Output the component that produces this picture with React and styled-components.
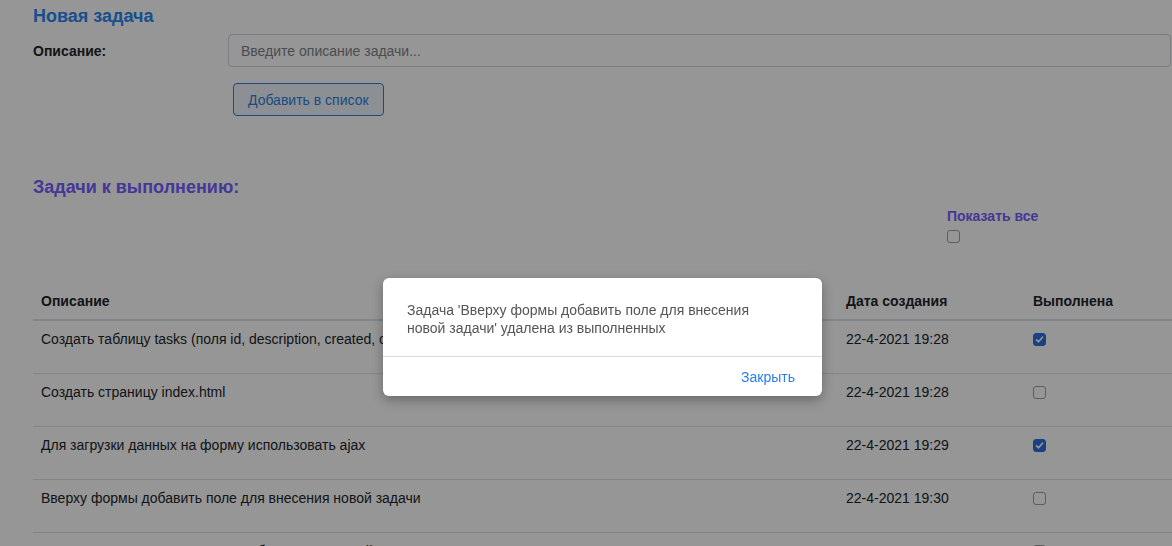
import React from "react";
import styled, { createGlobalStyle } from "styled-components";

const GlobalStyle = createGlobalStyle`
  html, body {
    margin: 0;
    padding: 0;
    overflow: hidden;
    background: #ffffff;
    font-family: "Liberation Sans", Arial, sans-serif;
    color: #212529;
  }
`;

const Page = styled.div`
  width: 1160px;
  padding-left: 33px;
`;

const Title = styled.h2`
  margin: 0;
  padding-top: 6px;
  font-size: 18px;
  line-height: 20px;
  font-weight: 700;
  color: ${(p) => p.$color};
`;

const FormRow = styled.div`
  display: grid;
  grid-template-columns: 195px 943px;
  align-items: center;
  margin-top: 8px;
`;

const Label = styled.label`
  font-size: 14px;
  font-weight: 700;
  color: #212529;
`;

const Input = styled.input`
  box-sizing: border-box;
  height: 33px;
  padding: 0 12px;
  border: 1px solid #ced4da;
  border-radius: 4px;
  font-family: inherit;
  font-size: 14px;
  background: #fff;
  &::placeholder {
    color: #7d848b;
  }
`;

const AddButton = styled.button`
  box-sizing: border-box;
  margin: 16px 0 0 200px;
  height: 33px;
  padding: 0 14px;
  border: 1px solid #2f7fd8;
  border-radius: 4px;
  background: #eef5fd;
  color: #2f7fd8;
  font-family: inherit;
  font-size: 14px;
`;

const SectionTitle = styled(Title)`
  margin-top: 55px;
`;

const ShowAll = styled.div`
  margin: 11px 0 0 914px;
  display: flex;
  flex-direction: column;
  gap: 6px;
`;

const ShowAllLabel = styled.span`
  font-size: 14px;
  line-height: 16px;
  font-weight: 700;
  color: #7460ff;
`;

const Table = styled.table`
  margin-top: 40px;
  width: 1152px;
  table-layout: fixed;
  border-collapse: collapse;
  font-size: 14px;
`;

const Th = styled.th`
  text-align: left;
  padding: 8px;
  line-height: 20px;
  font-weight: 700;
  border-bottom: 2px solid #dee2e6;
`;

const Td = styled.td`
  vertical-align: top;
  height: 20px;
  padding: 8px 8px 24px;
  line-height: 20px;
  border-bottom: 1px solid #dee2e6;
  white-space: nowrap;
  overflow: hidden;
`;

const Box = styled.span`
  display: block;
  box-sizing: border-box;
  width: 13px;
  height: 13px;
  margin-top: ${(p) => p.$top || 0}px;
  border-radius: 3px;
  border: 1px solid ${(p) => (p.$checked ? "#2f6fe0" : "#9aa0a6")};
  background: ${(p) => (p.$checked ? "#2f6fe0" : "#fff")};
  position: relative;
  svg {
    position: absolute;
    left: 1px;
    top: 1px;
  }
`;

const Backdrop = styled.div`
  position: fixed;
  inset: 0;
  background: rgba(0, 0, 0, 0.41);
`;

const Modal = styled.div`
  position: fixed;
  top: 278px;
  left: 383px;
  width: 439px;
  background: #fff;
  border-radius: 6px;
  box-shadow: 0 4px 12px rgba(0, 0, 0, 0.3);
  font-family: "Liberation Sans", Arial, sans-serif;
`;

const ModalBody = styled.div`
  padding: 23px 24px 19px;
  border-bottom: 1px solid #dcdcdc;
  p {
    margin: 0;
    max-width: 370px;
    font-size: 14px;
    line-height: 18px;
    color: #555;
  }
`;

const ModalFooter = styled.div`
  display: flex;
  justify-content: flex-end;
  padding: 0 27px;
  height: 39px;
  align-items: center;
`;

const CloseLink = styled.button`
  border: 0;
  background: none;
  padding: 0;
  font-family: inherit;
  font-size: 14px;
  color: #2b7de9;
`;

const Check = ({ checked, top }) => (
  <Box $checked={checked} $top={top}>
    {checked && (
      <svg width="9" height="9" viewBox="0 0 9 9">
        <path d="M1.5 4.8 L3.6 6.8 L7.5 2.2" fill="none" stroke="#fff" strokeWidth="1.6" strokeLinecap="round" strokeLinejoin="round" />
      </svg>
    )}
  </Box>
);

const tasks = [
  { text: "Создать таблицу tasks (поля id, description, created, completed)", date: "22-4-2021 19:28", done: true },
  { text: "Создать страницу index.html", date: "22-4-2021 19:28", done: false },
  { text: "Для загрузки данных на форму использовать ajax", date: "22-4-2021 19:29", done: true },
  { text: "Вверху формы добавить поле для внесения новой задачи", date: "22-4-2021 19:30", done: false },
  { text: "Выводить список задач в виде таблицы с отметкой о выполнении", date: "22-4-2021 19:31", done: false },
];

export default function App() {
  return (
    <>
      <GlobalStyle />
      <Page>
        <Title $color="#2a86f0">Новая задача</Title>
        <FormRow>
          <Label>Описание:</Label>
          <Input placeholder="Введите описание задачи..." />
        </FormRow>
        <AddButton>Добавить в список</AddButton>

        <SectionTitle $color="#7460ff">Задачи к выполнению:</SectionTitle>
        <ShowAll>
          <ShowAllLabel>Показать все</ShowAllLabel>
          <Check checked={false} />
        </ShowAll>

        <Table>
          <colgroup>
            <col style={{ width: 805 }} />
            <col style={{ width: 187 }} />
            <col style={{ width: 160 }} />
          </colgroup>
          <thead>
            <tr>
              <Th>Описание</Th>
              <Th>Дата создания</Th>
              <Th>Выполнена</Th>
            </tr>
          </thead>
          <tbody>
            {tasks.map((t) => (
              <tr key={t.text}>
                <Td>{t.text}</Td>
                <Td>{t.date}</Td>
                <Td>
                  <Check checked={t.done} top={4} />
                </Td>
              </tr>
            ))}
          </tbody>
        </Table>
      </Page>

      <Backdrop />
      <Modal>
        <ModalBody>
          <p>Задача 'Вверху формы добавить поле для внесения новой задачи' удалена из выполненных</p>
        </ModalBody>
        <ModalFooter>
          <CloseLink>Закрыть</CloseLink>
        </ModalFooter>
      </Modal>
    </>
  );
}
